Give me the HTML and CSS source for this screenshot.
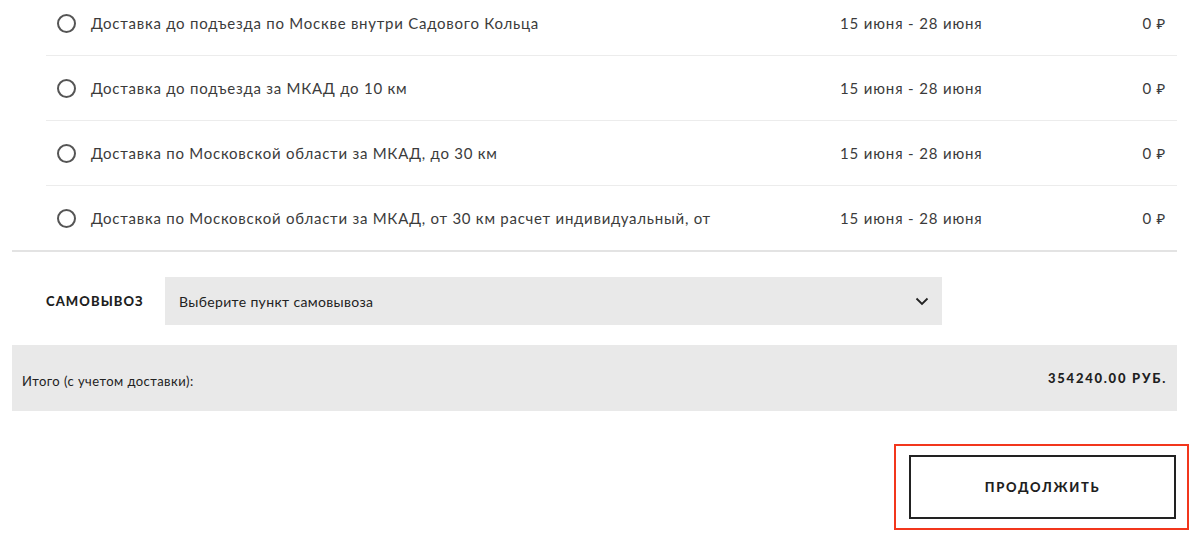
FILE: index.html
```html
<!DOCTYPE html>
<html lang="ru">
<head>
<meta charset="utf-8">
<link rel="stylesheet" href="styles.css">
</head>
<body>
<div class="page">
  <div class="options">
    <div class="opt">
      <span class="radio"></span>
      <span class="name">Доставка до подъезда по Москве внутри Садового Кольца</span>
      <span class="date">15 июня - 28 июня</span>
      <span class="price">0 ₽</span>
    </div>
    <div class="opt">
      <span class="radio"></span>
      <span class="name">Доставка до подъезда за МКАД до 10 км</span>
      <span class="date">15 июня - 28 июня</span>
      <span class="price">0 ₽</span>
    </div>
    <div class="opt">
      <span class="radio"></span>
      <span class="name">Доставка по Московской области за МКАД, до 30 км</span>
      <span class="date">15 июня - 28 июня</span>
      <span class="price">0 ₽</span>
    </div>
    <div class="opt">
      <span class="radio"></span>
      <span class="name">Доставка по Московской области за МКАД, от 30 км расчет индивидуальный, от</span>
      <span class="date">15 июня - 28 июня</span>
      <span class="price">0 ₽</span>
    </div>
  </div>
  <div class="divider"></div>
  <div class="pickup">
    <span class="pickup-label">Самовывоз</span>
    <div class="select">
      <span>Выберите пункт самовывоза</span>
      <svg class="chev" width="14" height="9" viewBox="0 0 14 9"><path d="M1.5 1.5 L7 7 L12.5 1.5" fill="none" stroke="#222" stroke-width="1.8"/></svg>
    </div>
  </div>
  <div class="total">
    <span class="total-label">Итого (с учетом доставки):</span>
    <span class="total-sum">354240.00 руб.</span>
  </div>
</div>
<div class="actions">
  <div class="highlight">
    <button class="btn">Продолжить</button>
  </div>
</div>
</body>
</html>
```

FILE: styles.css
```css
* { box-sizing: border-box; }
html, body { margin: 0; padding: 0; background: #fff; }
body {
  font-family: Lato, "Noto Sans", sans-serif;
  color: #333;
  width: 1200px;
  height: 536px;
  overflow: hidden;
}
.page {
  margin-left: 12px;
  width: 1165px;
}
.options {
  margin-left: 34px;
  margin-top: -9px;
}
.opt {
  display: grid;
  grid-template-columns: 19px 1fr 266px 60px;
  align-items: center;
  height: 65px;
  padding: 0 11px;
  border-bottom: 1px solid #ececec;
  font-size: 15px;
  letter-spacing: 0.75px;
  color: #3b3b3b;
}
.opt:last-child { border-bottom: none; height: 64px; }
.radio {
  width: 19px;
  height: 19px;
  border: 2px solid #555;
  border-radius: 50%;
}
.name { padding-left: 15px; white-space: nowrap; }
.date { white-space: nowrap; letter-spacing: 0.85px; }
.price { text-align: right; }
.divider {
  height: 2px;
  background: #e3e3e3;
}
.pickup {
  display: flex;
  align-items: center;
  margin-top: 25px;
  padding-left: 34px;
}
.pickup-label {
  width: 119px;
  font-size: 13px;
  font-weight: 900;
  text-transform: uppercase;
  color: #1f1f1f;
  letter-spacing: 1.1px;
}
.select {
  width: 777px;
  height: 48px;
  background: #e9e9e9;
  display: flex;
  align-items: center;
  justify-content: space-between;
  padding: 0 13px 0 14px;
  font-size: 14px;
  letter-spacing: 0.35px;
  color: #222;
}
.chev { display: block; }
.total {
  margin-top: 20px;
  height: 66px;
  background: #e9e9e9;
  display: flex;
  align-items: center;
  justify-content: space-between;
  padding: 0 11px 0 10px;
  font-size: 13px;
  color: #222;
}
.total-label { padding-top: 6px; letter-spacing: 0.45px; }
.total-sum {
  font-weight: 900;
  text-transform: uppercase;
  color: #1f1f1f;
  letter-spacing: 1.75px;
  margin-right: -1px;
}
.actions {
  display: flex;
  justify-content: flex-end;
  padding-right: 11px;
  margin-top: 33px;
}
.highlight {
  border: 2px solid #f2361c;
  padding: 9px 11px 9px 13px;
}
.btn {
  display: block;
  width: 267px;
  height: 64px;
  border: 2px solid #222;
  background: #fff;
  font-family: Lato, "Noto Sans", sans-serif;
  font-size: 13px;
  font-weight: 900;
  text-transform: uppercase;
  letter-spacing: 1.7px;
  color: #1f1f1f;
  padding: 0;
}
```
